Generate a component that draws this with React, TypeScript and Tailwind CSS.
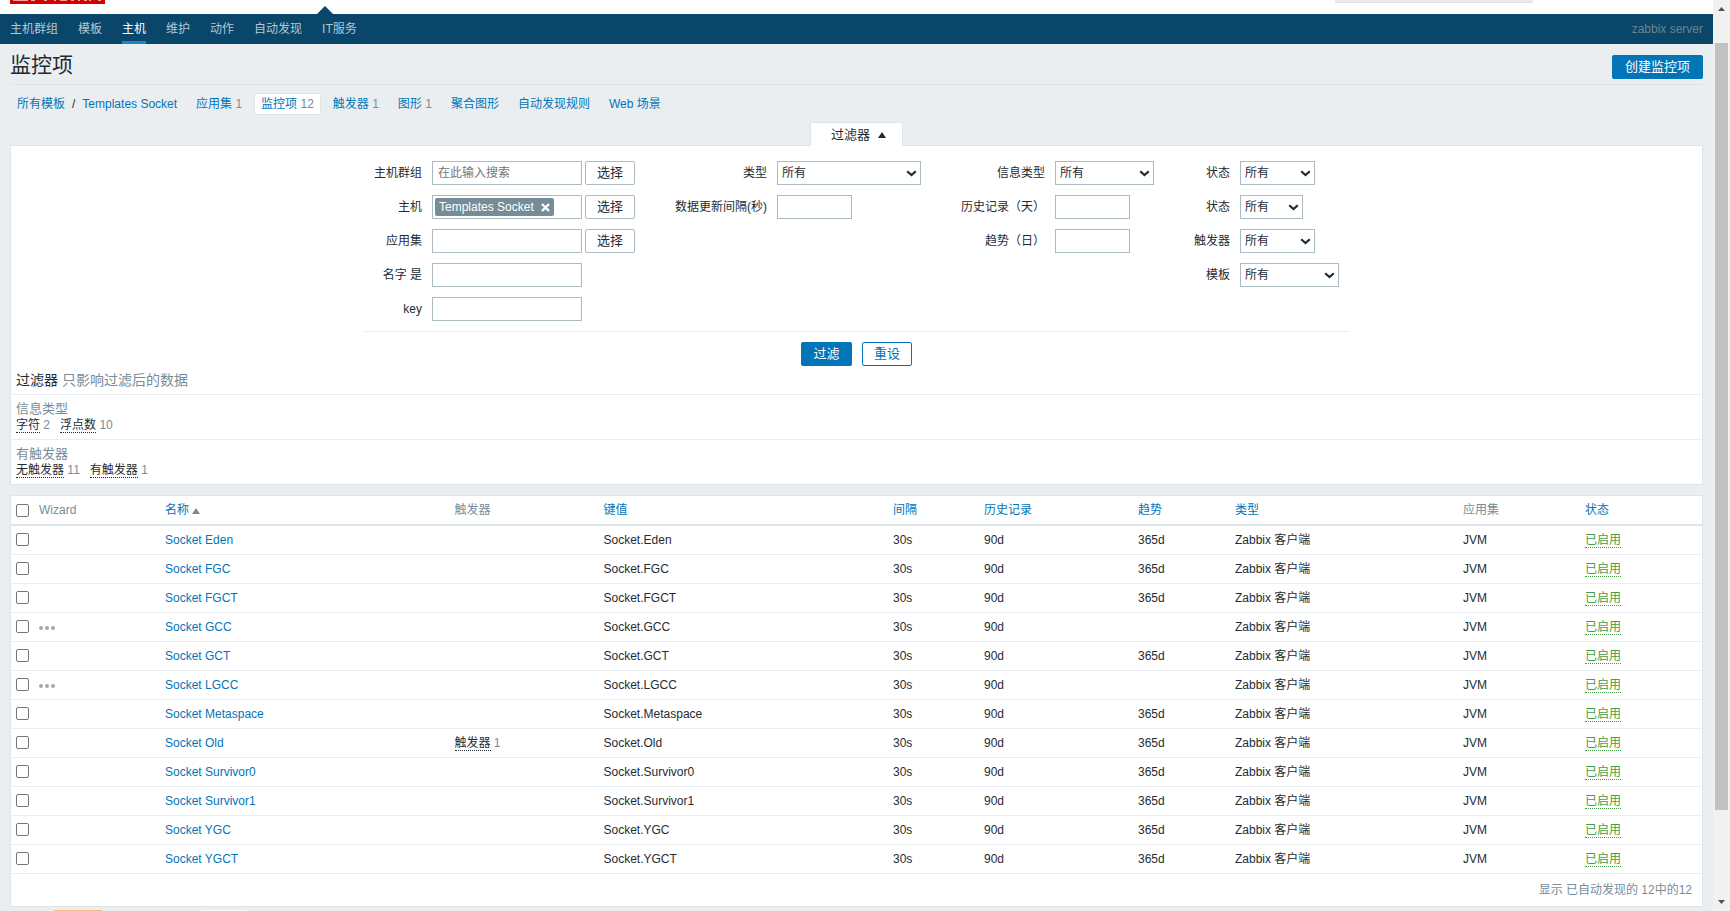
import type { ReactNode } from 'react';

interface Item {
  name: string;
  trends: boolean;
  wizard?: boolean;
  triggers?: number;
}

const items: Item[] = [
  { name: 'Eden', trends: true },
  { name: 'FGC', trends: true },
  { name: 'FGCT', trends: true },
  { name: 'GCC', trends: false, wizard: true },
  { name: 'GCT', trends: true },
  { name: 'LGCC', trends: false, wizard: true },
  { name: 'Metaspace', trends: true },
  { name: 'Old', trends: true, triggers: 1 },
  { name: 'Survivor0', trends: true },
  { name: 'Survivor1', trends: true },
  { name: 'YGC', trends: true },
  { name: 'YGCT', trends: true },
];

const navItems = ['主机群组', '模板', '主机', '维护', '动作', '自动发现', 'IT服务'];

const tabs = [
  { label: '应用集', count: 1 },
  { label: '监控项', count: 12, active: true },
  { label: '触发器', count: 1 },
  { label: '图形', count: 1 },
  { label: '聚合图形' },
  { label: '自动发现规则' },
  { label: 'Web 场景' },
];

const inputClass = 'h-6 border border-[#acbbc2] bg-white px-[5px] placeholder:text-[#757575]';
const checkboxClass =
  'block size-[13px] appearance-none rounded-[2px] border border-[#767676] bg-white checked:bg-[#0275b8]';

const Label = ({ htmlFor, children }: { htmlFor: string; children: ReactNode }) => (
  <label htmlFor={htmlFor} className="text-right leading-6 whitespace-nowrap">
    {children}
  </label>
);

const SelectButton = () => (
  <button className="h-6 w-[50px] rounded-[2px] border border-[#acbbc2] bg-white text-[13px]">
    选择
  </button>
);

const Select = ({ id, width }: { id: string; width: string }) => (
  <div className={`relative h-6 ${width}`}>
    <select
      id={id}
      className="h-6 w-full appearance-none border border-[#acbbc2] bg-white pl-1"
    >
      <option>所有</option>
    </select>
    <svg
      className="pointer-events-none absolute top-[9px] right-1 h-[7px] w-[11px]"
      viewBox="0 0 11 7"
    >
      <path d="M1.2 1.2L5.5 5L9.8 1.2" fill="none" stroke="#1f2c33" strokeWidth="2.2" />
    </svg>
  </div>
);

const Filter = () => (
  <div className="mx-auto flex w-fit border-b border-[#ebeef0] pr-[10px] pb-[10px]">
    <div className="grid grid-cols-[58px_203px] content-start gap-[10px]">
      <Label htmlFor="group">主机群组</Label>
      <div className="flex gap-[3px]">
        <input id="group" className={`${inputClass} w-[150px]`} placeholder="在此输入搜索" />
        <SelectButton />
      </div>
      <Label htmlFor="host">主机</Label>
      <div className="flex gap-[3px]">
        <div className="flex h-6 w-[150px] border border-[#acbbc2] bg-white p-[2px]">
          <span className="flex h-[18px] shrink-0 items-center rounded-[2px] bg-[#768d99] px-1 text-white">
            Templates Socket
            <button aria-label="移除" className="ml-[7px]">
              <svg className="size-[9px]" viewBox="0 0 9 9">
                <path d="M1 1L8 8M8 1L1 8" stroke="#fff" strokeWidth="2.4" />
              </svg>
            </button>
          </span>
          <input id="host" className="w-0 min-w-0 flex-1 outline-none" />
        </div>
        <SelectButton />
      </div>
      <Label htmlFor="application">应用集</Label>
      <div className="flex gap-[3px]">
        <input id="application" className={`${inputClass} w-[150px]`} />
        <SelectButton />
      </div>
      <Label htmlFor="name">名字 是</Label>
      <input id="name" className={`${inputClass} w-[150px]`} />
      <Label htmlFor="key">key</Label>
      <input id="key" className={`${inputClass} w-[150px]`} />
    </div>

    <div className="ml-[10px] grid grid-cols-[122px_144px] content-start gap-[10px]">
      <Label htmlFor="type">类型</Label>
      <Select id="type" width="w-[144px]" />
      <Label htmlFor="delay">数据更新间隔(秒)</Label>
      <input id="delay" className={`${inputClass} w-[75px]`} />
    </div>

    <div className="ml-[10px] grid grid-cols-[114px_99px] content-start gap-[10px]">
      <Label htmlFor="value-type">信息类型</Label>
      <Select id="value-type" width="w-[99px]" />
      <Label htmlFor="history">历史记录（天）</Label>
      <input id="history" className={`${inputClass} w-[75px]`} />
      <Label htmlFor="trends">趋势（日）</Label>
      <input id="trends" className={`${inputClass} w-[75px]`} />
    </div>

    <div className="ml-[10px] grid grid-cols-[66px_99px] content-start gap-[10px]">
      <Label htmlFor="state">状态</Label>
      <Select id="state" width="w-[75px]" />
      <Label htmlFor="status">状态</Label>
      <Select id="status" width="w-[63px]" />
      <Label htmlFor="with-triggers">触发器</Label>
      <Select id="with-triggers" width="w-[75px]" />
      <Label htmlFor="templated">模板</Label>
      <Select id="templated" width="w-[99px]" />
    </div>
  </div>
);

interface SubfilterProps {
  title: string;
  options: { label: string; count: number }[];
}

const Subfilter = ({ title, options }: SubfilterProps) => (
  <div className="border-t border-[#ebeef0] px-[5px] py-[6px] leading-4 text-[#768d99]">
    <h4 className="text-[13px] leading-4">{title}</h4>
    <div className="flex gap-[10px]">
      {options.map((o) => (
        <span key={o.label}>
          <a href="#" className="border-b border-dotted border-[#1f2c33] text-[#1f2c33]">
            {o.label}
          </a>{' '}
          {o.count}
        </span>
      ))}
    </div>
  </div>
);

const ItemTable = () => (
  <div className="mt-[10px] border border-[#dfe4e7] bg-white">
    <table className="w-full table-fixed text-left">
      <colgroup>
        <col className="w-[23px]" />
        <col className="w-[126px]" />
        <col />
        <col className="w-[149px]" />
        <col />
        <col className="w-[91px]" />
        <col className="w-[154px]" />
        <col className="w-[97px]" />
        <col className="w-[228px]" />
        <col className="w-[122px]" />
        <col className="w-[122px]" />
      </colgroup>
      <thead>
        <tr className="h-[29px] border-b-2 border-[#dfe4e7] text-[#768d99] *:px-[5px] *:font-normal">
          <th>
            <input type="checkbox" aria-label="全选" className={checkboxClass} />
          </th>
          <th>Wizard</th>
          <th>
            <a href="#" className="text-[#0275b8]">名称</a>
            <svg className="ml-[3px] inline-block h-[6px] w-2 align-baseline" viewBox="0 0 8 6">
              <path d="M4 0L8 6H0Z" fill="#768d99" />
            </svg>
          </th>
          <th>触发器</th>
          {['键值', '间隔', '历史记录', '趋势', '类型'].map((h) => (
            <th key={h}>
              <a href="#" className="text-[#0275b8]">{h}</a>
            </th>
          ))}
          <th>应用集</th>
          <th>
            <a href="#" className="text-[#0275b8]">状态</a>
          </th>
        </tr>
      </thead>
      <tbody>
        {items.map((item) => (
          <tr key={item.name} className="h-[29px] border-b border-[#ebeef0] *:px-[5px]">
            <td>
              <input
                type="checkbox"
                aria-label={`Socket ${item.name}`}
                className={checkboxClass}
              />
            </td>
            <td>
              {item.wizard && (
                <button aria-label="菜单" className="block pt-[2px]">
                  <svg className="block h-1 w-4" viewBox="0 0 16 4" fill="#9aabb5">
                    <circle cx="2" cy="2" r="2" />
                    <circle cx="8" cy="2" r="2" />
                    <circle cx="14" cy="2" r="2" />
                  </svg>
                </button>
              )}
            </td>
            <td>
              <a href="#" className="text-[#0275b8]">Socket {item.name}</a>
            </td>
            <td className="text-[#768d99]">
              {item.triggers && (
                <>
                  <a href="#" className="border-b border-dotted border-[#1f2c33] text-[#1f2c33]">
                    触发器
                  </a>{' '}
                  {item.triggers}
                </>
              )}
            </td>
            <td>Socket.{item.name}</td>
            <td>30s</td>
            <td>90d</td>
            <td>{item.trends && '365d'}</td>
            <td>Zabbix 客户端</td>
            <td>JVM</td>
            <td>
              <a href="#" className="border-b border-dotted border-[#429e47] text-[#429e47]">
                已启用
              </a>
            </td>
          </tr>
        ))}
      </tbody>
    </table>
    <div className="px-[10px] text-right leading-8 text-[#768d99]">
      显示 已自动发现的 12中的12
    </div>
  </div>
);

const Scrollbar = () => (
  <div className="flex w-[17px] shrink-0 flex-col items-center bg-[#f1f1f1]">
    <svg className="h-[43px] w-[17px] shrink-0" viewBox="0 0 17 43">
      <path d="M8.5 7L12 11H5Z" fill="#505050" />
    </svg>
    <div className="w-[13px] grow-[767] bg-[#c1c1c1]" />
    <div className="grow-[84]" />
    <svg className="h-[17px] w-[17px] shrink-0" viewBox="0 0 17 17">
      <path d="M5 6H12L8.5 10Z" fill="#505050" />
    </svg>
  </div>
);

const App = () => (
  <div className="flex h-screen overflow-hidden bg-[#ebeef0] font-['Liberation_Sans','Noto_Sans_CJK_SC',sans-serif] text-xs text-[#1f2c33]">
    <div className="min-w-0 flex-1 overflow-hidden">
      <header className="relative flex h-[14px] items-start justify-between bg-white pr-[180px] pl-[10px]">
        {/* logo */}
        <svg className="h-1 w-[95px]" viewBox="0 0 95 4">
          <path d="M0 0H95V4H0Z" fill="#d40000" />
          <path
            d="M3 0.5H18M21 0.5H25M34 0.5H37M44 0.5H46M50 0.5H57M61 0.5H64M68 0.5H70M74 0.5H77M79 0.5H81M88 0.5H91"
            stroke="#f0a0a0"
          />
        </svg>
        <div className="h-[3px] w-[198px] border-b border-[#dfdfdf] bg-[#ebebeb]" />
        <svg className="absolute bottom-0 left-[317px] h-2 w-4" viewBox="0 0 16 8">
          <path d="M8 0L16 8H0Z" fill="#0a466a" />
        </svg>
      </header>

      <nav className="flex h-[30px] items-center gap-5 bg-[#0a466a] px-[10px] text-[#b5c7d2]">
        {navItems.map((n) => (
          <a
            key={n}
            href="#"
            className={
              n === '主机'
                ? 'border-b-[3px] border-[#1a87c9] pt-[3px] leading-6 text-white'
                : 'leading-[30px]'
            }
          >
            {n}
          </a>
        ))}
        <span className="ml-auto text-[#6c8592]">zabbix server</span>
      </nav>

      <main className="px-[10px]">
        <div className="flex h-[41px] items-end justify-between border-b border-[#dfe4e7] pb-[5px]">
          <h1 className="text-[21px] leading-7">监控项</h1>
          <button className="h-6 rounded-[2px] bg-[#0275b8] px-[13px] text-[13px] text-white">
            创建监控项
          </button>
        </div>

        <div className="mt-2 flex h-[22px] items-center gap-[5px] leading-5 text-[#768d99]">
          <div className="flex">
            <a href="#" className="px-[7px] text-[#0275b8]">所有模板</a>
            <span className="text-[#1f2c33]">/</span>
            <a href="#" className="px-[7px] text-[#0275b8]">Templates Socket</a>
          </div>
          {tabs.map((t) => (
            <div
              key={t.label}
              className={
                t.active
                  ? 'rounded-[2px] border border-[#dfe4e7] bg-white px-[6px]'
                  : 'border border-transparent px-[6px]'
              }
            >
              <a href="#" className="text-[#0275b8]">{t.label}</a>
              {t.count && ` ${t.count}`}
            </div>
          ))}
        </div>

        <div className="mt-[7px] flex justify-center">
          <button className="relative z-10 -mb-px flex h-6 items-center gap-2 border border-b-0 border-[#dfe4e7] bg-white pr-4 pl-5 text-[13px]">
            过滤器
            <svg className="h-[6px] w-2" viewBox="0 0 8 6">
              <path d="M4 0L8 6H0Z" fill="#1f2c33" />
            </svg>
          </button>
        </div>

        <section className="border border-[#dfe4e7] bg-white pt-[15px]">
          <Filter />
          <div className="mt-[10px] flex justify-center gap-[10px] text-[13px]">
            <button className="h-6 w-[51px] rounded-[2px] bg-[#0275b8] text-white">过滤</button>
            <button className="h-6 w-[50px] rounded-[2px] border border-[#0275b8] bg-white text-[#0275b8]">
              重设
            </button>
          </div>
          <h4 className="px-[5px] text-sm leading-7 text-[#768d99]">
            <span className="text-[#1f2c33]">过滤器</span> 只影响过滤后的数据
          </h4>
          <Subfilter
            title="信息类型"
            options={[
              { label: '字符', count: 2 },
              { label: '浮点数', count: 10 },
            ]}
          />
          <Subfilter
            title="有触发器"
            options={[
              { label: '无触发器', count: 11 },
              { label: '有触发器', count: 1 },
            ]}
          />
        </section>

        <ItemTable />

        {/* top edge of the bar below the list */}
        <div className="mt-[3px] flex h-px gap-[99px] pl-11">
          <div className="w-12 bg-[#f8b784]" />
          <div className="w-11 bg-[#f8f8f8]" />
        </div>
      </main>
    </div>
    <Scrollbar />
  </div>
);

export default App;
